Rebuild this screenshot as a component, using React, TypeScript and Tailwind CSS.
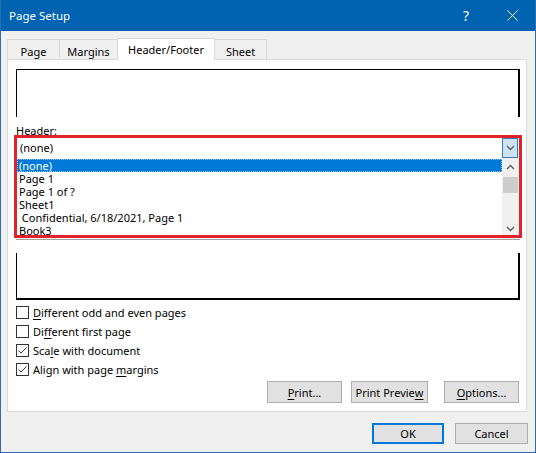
import React from "react";

function U({ children }: { children: React.ReactNode }) {
  return <span className="underline decoration-1 underline-offset-[2px]">{children}</span>;
}

function Chevron({ dir }: { dir: "up" | "down" }) {
  return (
    <svg width="9" height="6" viewBox="0 0 9 6">
      <polyline
        points={dir === "down" ? "1,1 4.5,4.5 8,1" : "1,5 4.5,1.5 8,5"}
        fill="none"
        stroke="#606060"
        strokeWidth="1.4"
      />
    </svg>
  );
}

function Check({ checked, children }: { checked?: boolean; children: React.ReactNode }) {
  return (
    <div className="h-[19px] flex items-center">
      <div className="w-[13px] h-[13px] border border-[#333333] bg-white flex items-center justify-center shrink-0">
        {checked && (
          <svg width="11" height="11" viewBox="0 0 11 11">
            <polyline points="1.5,5.5 4,8 9.5,2.5" fill="none" stroke="#333333" strokeWidth="1" />
          </svg>
        )}
      </div>
      <span className="ml-[4px] leading-[19px]">{children}</span>
    </div>
  );
}

function Btn({ className, children }: { className?: string; children: React.ReactNode }) {
  return (
    <div
      className={
        "flex items-center justify-center bg-[#e1e1e1] border border-[#adadad] leading-none " + (className ?? "")
      }
    >
      {children}
    </div>
  );
}

const items = ["Page 1", "Page 1 of ?", "Sheet1", " Confidential, 6/18/2021, Page 1", "Book3"];

export default function App() {
  return (
    <div className="w-[536px] h-[453px] bg-[#f0f0f0] border-x border-b border-[#2b6cb3] flex flex-col text-[11px] text-black [font-family:'Noto_Sans',sans-serif] overflow-hidden select-none">
      {/* Title bar */}
      <div className="h-[31px] bg-[#0063b1] flex items-center text-white shrink-0">
        <span className="pl-[8px] leading-none text-[11.5px]">Page Setup</span>
        <div className="ml-auto flex h-full">
          <div className="w-[46px] flex items-center justify-center text-[14px] leading-none">?</div>
          <div className="w-[46px] flex items-center justify-center">
            <svg width="11" height="11" viewBox="0 0 11 11">
              <line x1="0.5" y1="0.5" x2="10.5" y2="10.5" stroke="white" strokeWidth="1" />
              <line x1="10.5" y1="0.5" x2="0.5" y2="10.5" stroke="white" strokeWidth="1" />
            </svg>
          </div>
        </div>
      </div>

      {/* Tabs */}
      <div className="mt-[7px] ml-[6px] h-[21px] flex items-end shrink-0">
        <div className="w-[53px] h-[20px] border border-b-0 border-[#d9d9d9] bg-[#f0f0f0] flex items-center justify-center pt-[3px] leading-none">
          Page
        </div>
        <div className="-ml-px w-[59px] h-[20px] border border-b-0 border-[#d9d9d9] bg-[#f0f0f0] flex items-center justify-center pt-[3px] leading-none">
          Margins
        </div>
        <div className="-ml-px w-[98px] h-[22px] -mb-px relative z-10 border border-b-0 border-[#d9d9d9] bg-white flex items-center justify-center leading-none">
          Header/Footer
        </div>
        <div className="-ml-px w-[53px] h-[20px] border border-b-0 border-[#d9d9d9] bg-[#f0f0f0] flex items-center justify-center pt-[3px] leading-none">
          Sheet
        </div>
      </div>

      {/* Panel */}
      <div className="ml-[6px] w-[520px] h-[353px] bg-white border border-[#d9d9d9] px-[8px] flex flex-col shrink-0">
        <div className="mt-[9px] w-[504px] h-[48px] border-t border-l border-r-2 border-black shrink-0" />
        <div className="mt-[7px] h-[14px] leading-[14px]">
          He<U>a</U>der:
        </div>

        <div className="relative w-[504px] shrink-0">
          {/* combobox */}
          <div className="h-[20px] flex bg-white">
            <span className="flex-1 pl-[4px] leading-[20px]">(none)</span>
            <div className="w-[16px] h-[20px] mr-[2px] bg-[#cce4f7] border border-[#3d7ab5] flex items-center justify-center">
              <Chevron dir="down" />
            </div>
          </div>
          {/* list */}
          <div className="h-[82px] flex bg-white border-b border-[#a0a0a0] overflow-hidden">
            <div className="flex-1 pl-px pt-px">
              <div className="h-[13px] leading-[13px] bg-[#0078d7] text-white px-[2px] outline-1 outline-dotted outline-[#9cc8ec] -outline-offset-1">
                (none)
              </div>
              {items.map((t) => (
                <div key={t} className="h-[13px] leading-[13px] px-[2px] whitespace-pre">
                  {t}
                </div>
              ))}
            </div>
            <div className="w-[17px] mr-px bg-[#f0f0f0] flex flex-col pb-[2px]">
              <div className="h-[17px] flex items-center justify-center">
                <Chevron dir="up" />
              </div>
              <div className="mt-[2px] mx-px h-[16px] bg-[#cdcdcd]" />
              <div className="flex-1" />
              <div className="h-[17px] flex items-center justify-center">
                <Chevron dir="down" />
              </div>
            </div>
          </div>
          {/* red highlight overlay */}
          <div className="absolute left-[-2px] top-[-3px] w-[508px] h-[103px] border-[3px] border-[#e1222c] pointer-events-none" />
        </div>

        <div className="mt-[13px] w-[504px] h-[47px] border-l border-r-2 border-b-2 border-black shrink-0" />

        <div className="mt-[3px] flex flex-col">
          <Check>
            <U>D</U>ifferent odd and even pages
          </Check>
          <Check>
            Di<U>f</U>ferent first page
          </Check>
          <Check checked>
            Sca<U>l</U>e with document
          </Check>
          <Check checked>
            Align with page <U>m</U>argins
          </Check>
        </div>

        <div className="mt-[2px] w-[504px] h-[22px] flex shrink-0">
          <Btn className="ml-[251px] w-[75px] h-[22px]">
            <U>P</U>rint...
          </Btn>
          <Btn className="ml-[9px] w-[77px] h-[22px]">
            Print Previe<U>w</U>
          </Btn>
          <Btn className="ml-[16px] w-[75px] h-[22px]">
            <U>O</U>ptions...
          </Btn>
        </div>
      </div>

      {/* Bottom buttons */}
      <div className="mt-[11px] flex justify-end pr-[7px] gap-[11px] shrink-0">
        <Btn className="w-[72px] h-[21px] !border-2 !border-[#0078d7]">OK</Btn>
        <Btn className="w-[73px] h-[21px]">Cancel</Btn>
      </div>
    </div>
  );
}
